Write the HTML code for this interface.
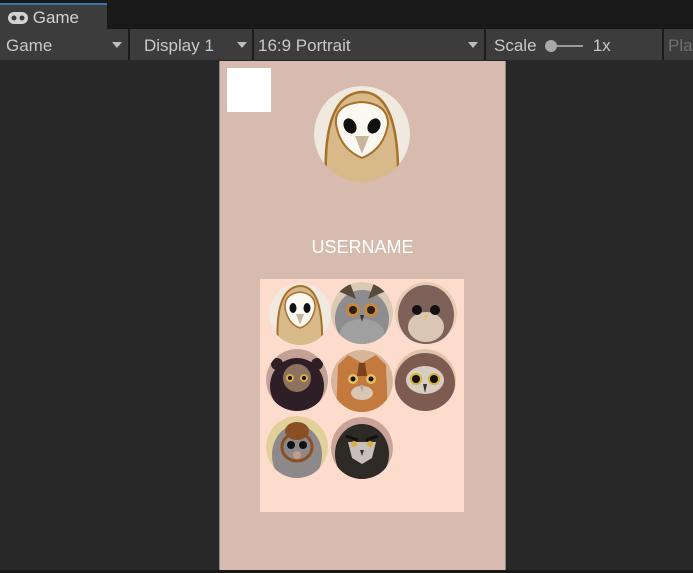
<!DOCTYPE html>
<html><head><meta charset="utf-8"><style>
*{margin:0;padding:0;box-sizing:border-box}
body{width:693px;height:573px;background:#282828;font-family:"Liberation Sans",sans-serif;position:relative;overflow:hidden;color:#c4c4c4}
.abs{position:absolute}
.tabbar{left:0;top:0;width:693px;height:29px;background:#191919}
.tab{left:0;top:3px;width:107px;height:26px;background:#3c3c3c;border-top:2px solid #3a72b0;font-size:17px;color:#d2d2d2;padding:3px 0 0 8px}
.tb{top:29px;height:31px;background:#3c3c3c;font-size:17px;color:#c8c8c8;padding:7px 0 0 6px}
.tbbar{left:0;top:29px;width:693px;height:31px;background:#1c1c1c}
.arr{position:absolute;top:13px;width:0;height:0;border-left:5px solid transparent;border-right:5px solid transparent;border-top:6px solid #bdbdbd}
.bottom{left:0;top:570px;width:693px;height:3px;background:#181818}
</style></head><body>
<div class="abs tabbar"></div>
<div class="abs tab"><svg width="20" height="12" viewBox="0 0 20 12" style="vertical-align:-1px"><rect x="0" y="0" width="20" height="12" rx="6" fill="#d2d2d2"/><circle cx="6" cy="6" r="2.5" fill="#3c3c3c"/><circle cx="14" cy="6" r="2.5" fill="#3c3c3c"/></svg> Game</div>
<div class="abs tbbar"></div>
<div class="abs tb" style="left:0;width:128px">Game<span class="arr" style="left:112px"></span></div>
<div class="abs tb" style="left:130px;width:122px;padding-left:14px">Display 1<span class="arr" style="left:107px"></span></div>
<div class="abs tb" style="left:254px;width:230px;padding-left:4px">16:9 Portrait<span class="arr" style="left:214px"></span></div>
<div class="abs tb" style="left:486px;width:176px;padding-left:8px">Scale <span style="display:inline-block;width:38px;position:relative;height:10px;margin-left:4px"><span style="position:absolute;left:0;top:4px;width:38px;height:2px;background:#9a9a9a"></span><span style="position:absolute;left:0;top:-1px;width:12px;height:12px;border-radius:6px;background:#a8a8a8"></span></span> &nbsp;1x</div>
<div class="abs tb" style="left:664px;width:29px;padding-left:4px;color:#707070">Pla</div>

<div class="abs" style="left:219px;top:61px;width:287px;height:509px;background:#d6bbae;border-left:1px solid #888;border-right:1px solid #888"></div>
<div class="abs" style="left:227px;top:68px;width:44px;height:44px;background:#fff"></div>
<div class="abs" style="left:220px;top:237px;width:285px;text-align:center;color:#fff;font-size:18px">USERNAME</div>
<div class="abs" style="left:260px;top:279px;width:204px;height:233px;background:#fedccd"></div>
<div class="abs" style="left:386px;top:375px;width:6px;height:6px;border-radius:3px;background:#e8282f"></div>

<svg class="abs" style="left:0;top:0" width="693" height="573">
<defs>
<clipPath id="cb" clipPathUnits="userSpaceOnUse"><circle r="48"/></clipPath>
<clipPath id="cs" clipPathUnits="userSpaceOnUse"><circle r="31"/></clipPath>
</defs>
<g transform="translate(362,134)"><g clip-path="url(#cb)">
<circle r="48" fill="#efe9df"/>
<path d="M-36 50 Q-40 -40 0 -42 Q38 -42 36 50Z" fill="#d8b98a" stroke="#a8702a" stroke-width="2.5"/>
<path d="M-26 -10 Q-28 -30 0 -32 Q26 -30 26 -10 Q22 15 0 24 Q-22 15 -26 -10Z" fill="#fbf8f2" stroke="#a8702a" stroke-width="2"/>
<ellipse cx="-12" cy="-8" rx="6" ry="8" fill="#111" transform="rotate(-30 -12 -8)"/>
<ellipse cx="12" cy="-8" rx="6" ry="8" fill="#111" transform="rotate(30 12 -8)"/>
<path d="M-7 2 L7 2 L0 20Z" fill="#c7b69e"/>
</g></g>

<g transform="translate(300,314)"><g clip-path="url(#cs)"><circle r="31" fill="#efe9df"/><path d="M-22 34 Q-26 -26 0 -28 Q24 -28 22 34Z" fill="#d8b98a" stroke="#a8702a" stroke-width="2"/><path d="M-15 -6 Q-16 -20 0 -22 Q16 -20 15 -6 Q12 10 0 14 Q-12 10 -15 -6Z" fill="#fbf8f2" stroke="#a8702a" stroke-width="1.5"/><ellipse cx="-7" cy="-6" rx="3.5" ry="5" fill="#111"/><ellipse cx="7" cy="-6" rx="3.5" ry="5" fill="#111"/><path d="M-4 0 L4 0 L0 11Z" fill="#c7b69e"/></g></g>
<g transform="translate(362,313)"><g clip-path="url(#cs)"><circle r="31" fill="#d9c9b5"/><ellipse cx="0" cy="6" rx="27" ry="29" fill="#8d8d8f"/><path d="M-24 -22 L-12 -30 L-6 -14Z M24 -22 L12 -30 L6 -14Z" fill="#5a4a3c"/><ellipse cx="0" cy="20" rx="22" ry="14" fill="#a0a0a0"/><circle cx="-9" cy="-3" r="7" fill="#c8873e"/><circle cx="9" cy="-3" r="7" fill="#c8873e"/><circle cx="-9" cy="-3" r="4" fill="#2a2018"/><circle cx="9" cy="-3" r="4" fill="#2a2018"/><path d="M-2 2 L2 2 L0 9Z" fill="#333"/></g></g>
<g transform="translate(426,313)"><g clip-path="url(#cs)"><circle r="31" fill="#e6ccb6"/><ellipse cx="0" cy="2" rx="28" ry="30" fill="#7e6259"/><ellipse cx="0" cy="14" rx="18" ry="15" fill="#d9c6b5"/><circle cx="-9" cy="-3" r="5" fill="#111"/><circle cx="9" cy="-3" r="5" fill="#111"/><path d="M-2 2 L2 2 L0 8Z" fill="#e8c560"/></g></g>

<g transform="translate(297,380)"><g clip-path="url(#cs)"><circle r="31" fill="#c4a197"/><ellipse cx="0" cy="6" rx="27" ry="28" fill="#2e1e26"/><circle cx="-20" cy="-16" r="6" fill="#2e1e26"/><circle cx="20" cy="-16" r="6" fill="#2e1e26"/><ellipse cx="0" cy="-2" rx="14" ry="14" fill="#8d7260"/><circle cx="-7" cy="-2" r="4" fill="#d8b040"/><circle cx="7" cy="-2" r="4" fill="#d8b040"/><circle cx="-7" cy="-2" r="2" fill="#111"/><circle cx="7" cy="-2" r="2" fill="#111"/></g></g>
<g transform="translate(362,381)"><g clip-path="url(#cs)"><circle r="31" fill="#d6b59a"/><path d="M-24 -16 L-14 -26 L0 -18 L14 -26 L24 -16 L26 34 L-26 34Z" fill="#c47a3e"/><path d="M-3 -18 L3 -18 L5 -5 L-5 -5Z" fill="#7a4220"/><circle cx="-9" cy="-2" r="5" fill="#e8c05a"/><circle cx="9" cy="-2" r="5" fill="#e8c05a"/><circle cx="-9" cy="-2" r="2.5" fill="#111"/><circle cx="9" cy="-2" r="2.5" fill="#111"/><ellipse cx="0" cy="12" rx="11" ry="7" fill="#d9c6b5"/><path d="M-2 4 L2 4 L0 12Z" fill="#aaa"/></g></g>
<g transform="translate(425,380)"><g clip-path="url(#cs)"><circle r="31" fill="#e0c4aa"/><ellipse cx="0" cy="3" rx="30" ry="30" fill="#7e5b50"/><ellipse cx="0" cy="0" rx="19" ry="14" fill="#d8cdc0"/><circle cx="-9" cy="-1" r="6" fill="#d4b03a"/><circle cx="9" cy="-1" r="6" fill="#d4b03a"/><circle cx="-9" cy="-1" r="4" fill="#111"/><circle cx="9" cy="-1" r="4" fill="#111"/><path d="M-2 4 L2 4 L0 13Z" fill="#333"/></g></g>

<g transform="translate(297,447)"><g clip-path="url(#cs)"><circle r="31" fill="#e2d09a"/><ellipse cx="0" cy="8" rx="25" ry="30" fill="#8d8889"/><ellipse cx="0" cy="-16" rx="12" ry="9" fill="#8a4f22"/><ellipse cx="0" cy="0" rx="15" ry="14" fill="none" stroke="#8a4f22" stroke-width="3"/><circle cx="-6" cy="-2" r="4" fill="#111"/><circle cx="6" cy="-2" r="4" fill="#111"/><circle cx="0" cy="8" r="4" fill="#c79b80"/></g></g>
<g transform="translate(362,448)"><g clip-path="url(#cs)"><circle r="31" fill="#c9a397"/><ellipse cx="0" cy="6" rx="27" ry="30" fill="#2e2a26"/><path d="M-14 -6 L14 -6 L10 10 L0 16 L-10 10Z" fill="#c8c0b8"/><circle cx="-8" cy="-4" r="3" fill="#d8b040"/><circle cx="8" cy="-4" r="3" fill="#d8b040"/><path d="M-16 -12 L-4 -8 M16 -12 L4 -8" stroke="#111" stroke-width="3"/><path d="M-2 2 L2 2 L0 8Z" fill="#333"/></g></g>
</svg>
<div class="abs bottom"></div>
</body></html>
